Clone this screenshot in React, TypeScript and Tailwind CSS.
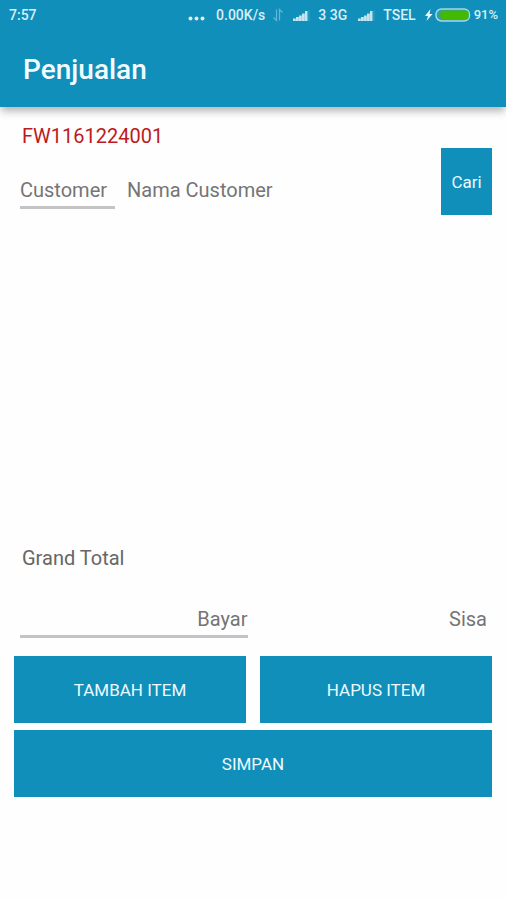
import React, { useState } from 'react';

const SignalIcon: React.FC = () => (
  <svg viewBox="0 0 18 14" className="w-[18px] h-[14px]" fill="currentColor" aria-hidden="true">
    <path d="M1 10.500h2.800v2.500H1zM4 9h2.800v4H4zM7 7.500h2.800v5.500H7zM10 5.500h2.800v7.500H10zM13 3h2.500v10H13z" opacity=".9" />
    <path d="M16.500 2h1v11h-1z" opacity=".2" />
  </svg>
);

const DataIcon: React.FC = () => (
  <svg viewBox="0 0 12 14" className="w-3 h-[14px]" fill="none" stroke="currentColor" strokeWidth="1.300" opacity=".4" aria-hidden="true">
    <path d="M4.500 1.500v11L1.500 9.500M7.500 12.500v-11l3 3" />
  </svg>
);

const BatteryIcon: React.FC = () => (
  <svg viewBox="0 0 47 16" className="w-[47px] h-4" aria-hidden="true">
    <path d="M6.500 2 1 9h3l-1.500 5L8.500 7H5.500z" fill="#eefaff" />
    <rect x="12" y="2" width="33.500" height="12" rx="5.500" fill="#2f9cba" stroke="#a5d8e2" strokeWidth="1.500" />
    <path d="M17.500 3.500H42a2.500 2.500 0 0 1 2.500 2.500v4a2.500 2.500 0 0 1-2.500 2.500H17.500Q14.500 8 17.500 3.500z" fill="#43b900" />
  </svg>
);

const StatusBar: React.FC = () => (
  <div className="flex h-[30px] items-center justify-between px-2 text-[13px] font-medium text-[#d9eef6]">
    <span className="pl-px text-sm">7:57</span>
    <div className="flex items-center">
      <svg viewBox="0 0 17 14" className="mr-[11px] w-[17px] h-[14px]" fill="currentColor" aria-hidden="true">
        <circle cx="2.500" cy="10.500" r="2" />
        <circle cx="8.500" cy="10.500" r="2" />
        <circle cx="14.500" cy="10.500" r="2" />
      </svg>
      <span className="mr-[7px] text-sm">0.00K/s</span>
      <DataIcon />
      <span className="mx-2"><SignalIcon /></span>
      <span className="mr-[10px] text-sm">3 3G</span>
      <SignalIcon />
      <span className="mx-2 text-sm">TSEL</span>
      <BatteryIcon />
      <span className="ml-[3px]">91%</span>
    </div>
  </div>
);

const buttonClass = 'h-[67px] pt-[2px] bg-[#0f8fba] text-[17px] text-[#eefaff] cursor-pointer';
const inputClass = 'h-9 min-w-0 border-b-[3px] bg-transparent text-xl text-[#757575] placeholder:text-[#757575] outline-none';

export default function App() {
  const [customer, setCustomer] = useState('');
  const [bayar, setBayar] = useState('');

  return (
    <div className="flex min-h-screen flex-col bg-[#fefefe] font-[Roboto,sans-serif]">
      <header className="bg-[#0f8fba] shadow-[0_5px_8px_-1px_rgba(0,0,0,0.3)]">
        <StatusBar />
        <div className="flex h-[77px] items-center px-[23px] pt-[2px]">
          <h1 className="text-[28px] font-medium text-[#f2fbff]">Penjualan</h1>
        </div>
      </header>

      <main className="flex flex-1 flex-col px-[14px] pt-[17px] pb-[103px]">
        <p className="pl-2 text-xl leading-6 text-[#bd1a20]">FW1161224001</p>

        {/* Pencarian customer */}
        <div className="flex items-end">
          <div className="flex flex-1 gap-3 pl-[6px] pb-[6px]">
            <input
              className={`${inputClass} w-[95px] border-[#c4c4c4]`}
              placeholder="Customer"
              aria-label="Customer"
              value={customer}
              onChange={(e) => setCustomer(e.target.value)}
            />
            <input
              className={`${inputClass} flex-1 border-transparent`}
              placeholder="Nama Customer"
              aria-label="Nama Customer"
              readOnly
            />
          </div>
          <button type="button" className={`${buttonClass} w-[51px]`}>Cari</button>
        </div>

        {/* Daftar item */}
        <div className="flex-1" />

        <p className="pl-2 text-xl leading-6 text-[#666]">Grand Total</p>

        <div className="mt-8 flex gap-3 pl-[6px] pr-[5px]">
          <input
            className={`${inputClass} flex-1 border-[#c4c4c4] text-right`}
            placeholder="Bayar"
            aria-label="Bayar"
            inputMode="numeric"
            value={bayar}
            onChange={(e) => setBayar(e.target.value)}
          />
          <input
            className={`${inputClass} flex-1 border-transparent text-right`}
            placeholder="Sisa"
            aria-label="Sisa"
            readOnly
          />
        </div>

        <div className="mt-[18px] grid grid-cols-2 gap-x-[14px] gap-y-[7px]">
          <button type="button" className={buttonClass}>TAMBAH ITEM</button>
          <button type="button" className={buttonClass}>HAPUS ITEM</button>
          <button type="button" className={`${buttonClass} col-span-2`}>SIMPAN</button>
        </div>
      </main>
    </div>
  );
}
